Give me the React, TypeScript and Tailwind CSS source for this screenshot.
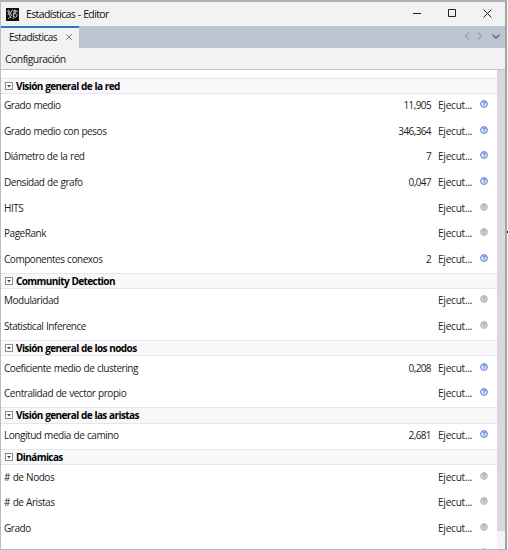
import React from "react";

type Row = { name: string; value?: string; report?: boolean };
type Section = { title: string; rows: Row[] };

const sections: Section[] = [
  {
    title: "Visión general de la red",
    rows: [
      { name: "Grado medio", value: "11,905", report: true },
      { name: "Grado medio con pesos", value: "346,364", report: true },
      { name: "Diámetro de la red", value: "7", report: true },
      { name: "Densidad de grafo", value: "0,047", report: true },
      { name: "HITS" },
      { name: "PageRank" },
      { name: "Componentes conexos", value: "2", report: true },
    ],
  },
  { title: "Community Detection", rows: [{ name: "Modularidad" }, { name: "Statistical Inference" }] },
  {
    title: "Visión general de los nodos",
    rows: [
      { name: "Coeficiente medio de clustering", value: "0,208", report: true },
      { name: "Centralidad de vector propio", report: true },
    ],
  },
  { title: "Visión general de las aristas", rows: [{ name: "Longitud media de camino", value: "2,681", report: true }] },
  { title: "Dinámicas", rows: [{ name: "# de Nodos" }, { name: "# de Aristas" }, { name: "Grado" }, { name: "" }] },
];

function HelpIcon({ active }: { active?: boolean }) {
  const stroke = active ? "#6279d8" : "#b8b8b8";
  return (
    <svg width="8" height="8" viewBox="0 0 8 8" fill="none" className="shrink-0">
      <circle cx="4" cy="4" r="3.4" fill={active ? "#e0e6fa" : "#d2d2d2"} stroke={stroke} strokeWidth="1" />
      <path d="M2.8 2.9Q3 2 4 2Q5.3 2 5.2 3Q5.1 3.7 4.2 4.1V4.8M4.2 5.4V6.2" stroke={active ? "#4059c8" : "#989898"} strokeWidth="0.9" />
    </svg>
  );
}

function SectionHeader({ title }: { title: string }) {
  return (
    <div className="flex h-[16.3px] shrink-0 items-center border-y border-[#e1e7f9] bg-[#f8f8f8] pl-1">
      <svg width="8" height="8" viewBox="0 0 8 8" className="mr-[3px] shrink-0">
        <rect x="0.5" y="0.5" width="7" height="7" fill="#fff" stroke="#8c8c8c" />
        <path d="M2 3H6L4 5.4Z" fill="#444" />
      </svg>
      <span className="text-[10px] leading-none font-bold tracking-[-0.6px] text-black [word-spacing:0.4px]">{title}</span>
    </div>
  );
}

function StatRow({ row }: { row: Row }) {
  return (
    <div className="flex h-[25.53px] shrink-0 items-center pb-[2.6px] pl-[3px] text-[10px] leading-none tracking-[-0.1px] text-[#1c1c1c]">
      <span className="flex-1 tracking-[-0.46px] [word-spacing:0.5px]">{row.name}</span>
      <span className="w-[60px] text-right tracking-[-0.6px]">{row.value}</span>
      <span className="ml-[7px] w-[41.5px] tracking-[-0.2px]">{row.name && "Ejecut..."}</span>
      <span className="mr-[9.5px] pb-0.5">
        <HelpIcon active={row.report} />
      </span>
    </div>
  );
}

function AppIcon() {
  return (
    <svg width="13" height="13" viewBox="0 0 13 13" fill="none" className="shrink-0">
      <rect width="13" height="13" fill="#101010" />
      <path d="M1 3L3 4L2 7M2 2Q5 3 3.5 7L5 10M6.5 1.5L4.5 5L6 8M7 4Q9 1 10 2.5Q10 5 7.5 6Q11.5 5 11 8Q9.5 11 7.5 8M8.5 2L7 11M2 11L5 8M10 3L12 4" stroke="#dcdcdc" strokeWidth="0.85" />
    </svg>
  );
}

export default function App() {
  return (
    <div className="flex h-[550px] w-[508px] overflow-hidden bg-[#f5f5f5] font-['Open_Sans','Noto_Sans',sans-serif] whitespace-nowrap">
      <div className="flex w-[507px] flex-col border-t-2 border-r-2 border-b border-l border-t-[#b2b2b2] border-r-[#a4a4a4] border-b-[#b8b8b8] border-l-[#bdbdbd] bg-white">
        <header className="flex h-6 shrink-0 items-center bg-[#f2f2f2] pl-[5px]">
          <AppIcon />
          <span className="ml-[7px] flex-1 text-[10.5px] leading-none tracking-[-0.63px] text-[#111] [word-spacing:0.5px]">Estadísticas - Editor</span>
          <svg width="92" height="12" viewBox="0 0 92 12" fill="none" stroke="#222" className="shrink-0">
            <path d="M0 5.5H8M35.5 1.5H42.5V8.5H35.5ZM70.5 1.5L78.5 9.5M78.5 1.5L70.5 9.5" />
          </svg>
        </header>
        <nav className="flex h-[22px] shrink-0 items-stretch bg-[#bac5d0]">
          <div className="flex w-[78px] items-center border-t-2 border-[#2b78c5] bg-[#f2f2f2] pb-0.5 pl-2">
            <span className="w-[57px] text-[10px] leading-none tracking-[-0.5px] text-[#111]">Estadísticas</span>
            <svg width="6" height="6" viewBox="0 0 6 6" stroke="#7c7c7c" strokeWidth="0.9" className="shrink-0">
              <path d="M0 0L6 6M6 0L0 6" />
            </svg>
          </div>
          <div className="flex flex-1 items-center justify-end pr-[5px] pb-0.5">
            <svg width="36" height="10" viewBox="0 0 36 10" fill="none" strokeWidth="1.2">
              <path d="M5 1.5L1.5 5L5 8.5M14 1.5L17.5 5L14 8.5" stroke="#9ba4ac" />
              <path d="M28.5 3.5L32 7L35.5 3.5" stroke="#586673" strokeWidth="1.4" />
            </svg>
          </div>
        </nav>
        <div className="flex h-[22px] shrink-0 items-center border-b border-[#c6c6c6] bg-[#f2f2f2] pt-px pl-1 text-[10.5px] leading-none tracking-[-0.58px] text-[#222]">
          Configuración
        </div>
        <main className="flex min-h-0 flex-1">
          <div className="min-w-0 flex-1 overflow-hidden pt-[7.7px]">
            {sections.map((s) => (
              <section key={s.title}>
                <SectionHeader title={s.title} />
                {s.rows.map((r, i) => (
                  <StatRow key={i} row={r} />
                ))}
              </section>
            ))}
          </div>
          <div className="w-2 shrink-0 bg-[#f3f3f3]">
            <div className="h-[461px] bg-[#d9d9d9]" />
          </div>
        </main>
      </div>
      <div className="mt-[231px] h-[2px] w-px bg-[#333]" />
    </div>
  );
}
